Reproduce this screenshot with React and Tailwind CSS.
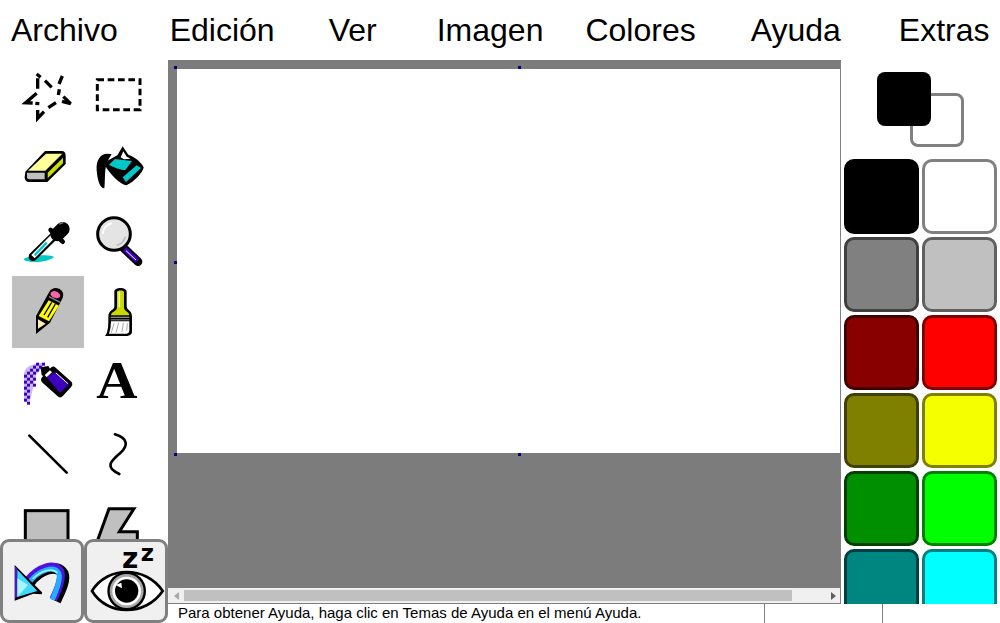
import React from "react";

const menus = [
  { label: "Archivo", cls: "ml-[11px]" },
  { label: "Edición", cls: "ml-[52px]" },
  { label: "Ver", cls: "ml-[54px]" },
  { label: "Imagen", cls: "ml-[60px]" },
  { label: "Colores", cls: "ml-[42px]" },
  { label: "Ayuda", cls: "ml-[55px]" },
  { label: "Extras", cls: "ml-[58px]" },
];

const swatches = [
  "bg-[#000000] border-[#000000]",
  "bg-[#ffffff] border-[#808080]",
  "bg-[#808080] border-[#404040]",
  "bg-[#c0c0c0] border-[#606060]",
  "bg-[#880000] border-[#400000]",
  "bg-[#ff0000] border-[#800000]",
  "bg-[#808000] border-[#404000]",
  "bg-[#f6ff00] border-[#808000]",
  "bg-[#008f00] border-[#004000]",
  "bg-[#00ff00] border-[#008000]",
  "bg-[#008680] border-[#004040]",
  "bg-[#00ffff] border-[#008080]",
];

// drawings use the coordinates of a 3x blow-up, hence the big viewBoxes
const Icon = ({ box, children }) => (
  <svg viewBox={box} className="w-[72px] h-[72px]">
    {children}
  </svg>
);

const Lasso = () => (
  <Icon box="36 0 216 216">
    <path
      d="M110 42L122 52M113 55L113 86M110 100L77 128L98 129M106 130L118 131M113 150L113 175L132 155M145 143L168 128M186 124L212 131L190 110M175 105L178 88M177 72L187 48M155 82L135 62"
      fill="none"
      stroke="#000"
      strokeWidth="10"
    />
  </Icon>
);

const RectSelect = () => (
  <Icon box="252 0 216 216">
    <rect x="292" y="59" width="128" height="90" fill="none" stroke="#000" strokeWidth="9" strokeDasharray="20 11" />
  </Icon>
);

const Eraser = () => (
  <Icon box="36 216 216 216">
    <path d="M76 335L135 273H185Q197 273 197 288V312L142 366H88Q74 366 74 352Z" fill="#000" />
    <path d="M84 332L138 281H187L136 332Z" fill="#ffff99" />
    <path d="M81 338H134V358H88Q81 358 81 352Z" fill="#c0c0c0" />
    <path d="M143 338L189 293V310L143 355Z" fill="#c8e000" />
  </Icon>
);

const Fill = () => (
  <Icon box="252 216 216 216">
    <path d="M335 283C302 274 288 300 290 330C292 360 300 385 313 385C318 350 308 320 335 283Z" fill="#000" />
    <path d="M368 259L385 284C405 290 425 308 431 322C428 340 395 372 378 376C360 372 332 345 314 315L325 301L352 286Z" fill="#000" />
    <path d="M327 314L345 297L396 303L376 330C362 330 340 322 327 314Z" fill="#00c8c8" />
    <path d="M362 292L370 274L380 290L392 296L372 298Z" fill="#ffffff" />
    <path d="M378 366L368 352L410 316L423 324Z" fill="#00c8c8" />
  </Icon>
);

const Dropper = () => (
  <Icon box="36 432 216 216">
    <path d="M72 596C90 585 140 582 162 590C150 605 95 612 72 600Z" fill="#00c8c8" />
    <path d="M99 590L165 525" stroke="#000" strokeWidth="26" strokeLinecap="round" />
    <path d="M99 590L160 528" stroke="#fff" strokeWidth="14" />
    <path d="M104 586L140 548" stroke="#00c8c8" strokeWidth="7" />
    <path d="M152 510L188 545" stroke="#000" strokeWidth="14" strokeLinecap="round" />
    <path d="M172 523L188 507" stroke="#000" strokeWidth="42" strokeLinecap="round" />
    <path d="M178 492L190 488" stroke="#777" strokeWidth="4" />
  </Icon>
);

const Magnifier = () => (
  <Icon box="252 432 216 216">
    <path d="M372 565L414 605" stroke="#000" strokeWidth="26" strokeLinecap="round" />
    <path d="M374 567L412 603" stroke="#4000c0" strokeWidth="15" />
    <path d="M378 572L408 600" stroke="#fff" strokeWidth="3" />
    <circle cx="342" cy="522" r="49" fill="#e4e4e4" stroke="#000" strokeWidth="9" />
    <path d="M308 522A34 34 0 0 1 335 490" fill="none" stroke="#fff" strokeWidth="6" />
    <path d="M350 556A34 34 0 0 0 376 530" fill="none" stroke="#bbb" strokeWidth="5" />
  </Icon>
);

const Pencil = () => (
  <Icon box="36 48 216 216">
    <path d="M108 222L108 168L148 95C155 82 175 80 185 92C192 100 190 110 186 118L150 188Z" fill="#000" />
    <path d="M116 168L146 121L177 137L147 184Z" fill="#ffff00" />
    <path d="M132 165L155 127M143 172L166 132" stroke="#000" strokeWidth="4" />
    <path d="M114 178L137 191L114 206Z" fill="#ffeeb0" />
    <path d="M147 110L182 128" stroke="#888" strokeWidth="4" />
    <ellipse cx="166" cy="104" rx="15" ry="10" fill="#ff60b0" transform="rotate(20 166 104)" />
  </Icon>
);

const Brush = () => (
  <Icon box="252 48 216 216">
    <path d="M343 95C343 80 380 80 380 95L380 140C380 150 396 150 396 170L396 215C396 225 385 228 375 228L315 228C325 215 325 195 325 170C325 150 343 150 343 140Z" fill="#000" />
    <path d="M351 96C351 90 372 90 372 96L372 142C372 155 388 155 388 166H333C333 155 351 155 351 142Z" fill="#c8d800" />
    <path d="M358 95V142" stroke="#f4ff90" strokeWidth="5" />
    <rect x="332" y="170" width="56" height="4" fill="#888" />
    <rect x="332" y="178" width="56" height="3" fill="#888" />
    <path d="M333 184H388V214Q388 220 380 221H327Q333 205 333 184Z" fill="#fff" />
    <path d="M342 190L334 218M356 188L348 218M370 188L366 216M382 190L380 212" stroke="#aaa" strokeWidth="3" />
  </Icon>
);

const spray = [];
for (let y = 308; y < 426; y += 9) {
  for (let x = 72; x < 134; x += 9) {
    const inBand =
      (y < 317 && x >= 108) ||
      (y >= 317 && y < 326 && x >= 90 && x < 130) ||
      (y >= 326 && y < 344 && x >= 81 && x < 117) ||
      (y >= 344 && y < 380 && x < 108) ||
      (y >= 380 && x < 90);
    if (inBand && ((x - 72) / 9 + (y - 308) / 9) % 2 === 0) spray.push([x, y]);
  }
}

const Spray = () => (
  <Icon box="36 264 216 216">
    <path d="M72 424V340Q76 312 128 308V322L108 344L90 424Z" fill="#c8b8f4" />
    {spray.map(([x, y]) => (
      <rect key={x + "-" + y} x={x} y={y} width="9" height="9" fill="#4000c0" />
    ))}
    <path d="M122 322L145 318L152 330L132 350L125 345Z" fill="#000" />
    <rect x="128" y="336" width="84" height="60" rx="12" fill="#000" transform="rotate(42 170 366)" />
    <path d="M134 345L150 331L156 337L140 352Z" fill="#fff" />
    <path d="M140 352L166 335L207 372L180 399Z" fill="#4000c0" />
    <path d="M168 339L204 371" stroke="#fff" strokeWidth="3" />
  </Icon>
);

const TextTool = () => (
  <Icon box="252 264 216 216">
    <text transform="translate(351 415) scale(1.1 1)" textAnchor="middle" fontFamily="'Liberation Serif', serif" fontWeight="bold" fontSize="156" fill="#000">
      A
    </text>
  </Icon>
);

const Line = () => (
  <Icon box="36 0 216 216">
    <path d="M88 47L200 158" stroke="#000" strokeWidth="8" strokeLinecap="round" />
  </Icon>
);

const Curve = () => (
  <Icon box="252 0 216 216">
    <path d="M345 43C385 55 385 78 360 100C330 125 315 142 358 162" fill="none" stroke="#000" strokeWidth="8" strokeLinecap="round" />
  </Icon>
);

const RectTool = () => (
  <Icon box="36 216 216 216">
    <rect x="76" y="272" width="128" height="130" fill="#c0c0c0" stroke="#000" strokeWidth="9" />
  </Icon>
);

const PolyTool = () => (
  <Icon box="252 216 216 216">
    <path d="M327 266H402L358 335H412V410H275Z" fill="#c0c0c0" stroke="#000" strokeWidth="9" />
  </Icon>
);

const tools = [
  Lasso, RectSelect, Eraser, Fill, Dropper, Magnifier, Pencil, Brush, Spray, TextTool, Line, Curve, RectTool, PolyTool,
];

const Undo = () => (
  <svg viewBox="9 21 234 234" className="w-[78px] h-[78px]">
    <path d="M90 142C118 104 172 84 190 116C198 136 180 170 167 198" fill="none" stroke="#000" strokeWidth="32" />
    <path d="M84 136C114 98 164 80 181 110C189 130 172 168 160 193" fill="none" stroke="#5010e0" strokeWidth="24" />
    <path d="M88 142C116 106 162 90 176 114C184 132 168 168 157 194" fill="none" stroke="#20b0ff" strokeWidth="15" />
    <path d="M98 132C122 108 156 96 172 114" fill="none" stroke="#a0f4ff" strokeWidth="5" />
    <path d="M44 90L126 172V178L100 176L44 197Z" fill="#000" />
    <path d="M45 94L52 102V186L45 190Z" fill="#5010e0" />
    <path d="M52 104L112 168L52 186Z" fill="#40d8ff" />
    <path d="M52 130L84 150L52 186Z" fill="#a8f4ff" />
  </svg>
);

const Eye = () => (
  <svg viewBox="9 21 234 234" className="w-[78px] h-[78px] overflow-visible">
    <text x="114" y="99" fontFamily="'DejaVu Sans', sans-serif" fontWeight="bold" fontSize="84" fill="#000">
      z
    </text>
    <text x="170" y="78" fontFamily="'DejaVu Sans', sans-serif" fontWeight="bold" fontSize="68" fill="#000">
      z
    </text>
    <path d="M24 168C70 92 185 92 236 168C185 244 70 244 24 168Z" fill="#fff" stroke="#000" strokeWidth="8" />
    <circle cx="128" cy="168" r="58" fill="#000" />
    <circle cx="128" cy="168" r="51" fill="#a8a8a8" />
    <circle cx="128" cy="168" r="43" fill="#fff" />
    <circle cx="128" cy="168" r="35" fill="#000" />
    <path d="M94 150L112 143L114 160Z" fill="#fff" />
  </svg>
);

export default function App() {
  return (
    <div className="relative w-[1000px] h-[623px] flex flex-col overflow-hidden bg-white font-['Liberation_Sans',sans-serif] text-black">
      <div className="h-[60px] flex items-center text-[32px] leading-none">
        {menus.map((m) => (
          <span key={m.label} className={m.cls}>
            {m.label}
          </span>
        ))}
      </div>

      <div className="h-[544px] flex">
        <div className="w-[168px] h-full overflow-hidden px-3">
          <div className="grid grid-cols-[72px_72px] auto-rows-[72px]">
            {tools.map((Tool, i) => (
              <div key={i} className={i === 6 ? "bg-[#c0c0c0]" : ""}>
                <Tool />
              </div>
            ))}
          </div>
        </div>

        <div className="w-[673px] h-full flex flex-col border-r border-[#808080]">
          <div className="h-[528px] bg-[#7c7c7c] pl-[9px] pt-[9px] overflow-hidden">
            <div className="relative w-[684px] h-[384px] bg-white">
              <div className="absolute -left-[3px] -top-[3px] w-[3px] h-[3px] bg-[#000080]" />
              <div className="absolute left-[341px] -top-[3px] w-[3px] h-[3px] bg-[#000080]" />
              <div className="absolute -left-[3px] top-[192px] w-[3px] h-[3px] bg-[#000080]" />
              <div className="absolute -left-[3px] top-full w-[3px] h-[3px] bg-[#000080]" />
              <div className="absolute left-[341px] top-full w-[3px] h-[3px] bg-[#000080]" />
            </div>
          </div>
          <div className="h-[16px] flex items-center bg-[#f0f0f0] border-b border-[#808080]">
            <svg viewBox="0 0 5 8" className="ml-[6px] w-[5px] h-[8px]">
              <path d="M5 0V8L0 4Z" fill="#a8a8a8" />
            </svg>
            <div className="ml-[5px] w-[608px] h-[11px] bg-[#c0c0c0]" />
            <svg viewBox="0 0 5 8" className="ml-[39px] w-[5px] h-[8px]">
              <path d="M0 0V8L5 4Z" fill="#606060" />
            </svg>
          </div>
        </div>

        <div className="flex-1 h-full overflow-hidden pl-[3px]">
          <div className="h-[99px] pl-[66px] pt-[33px]">
            <div className="relative w-[54px] h-[54px] bg-white border-[3px] border-[#808080] rounded-lg">
              <div className="absolute -left-[36px] -top-[24px] w-[54px] h-[54px] bg-black rounded-lg" />
            </div>
          </div>
          <div className="grid grid-cols-[75px_75px] auto-rows-[75px] gap-[3px]">
            {swatches.map((s) => (
              <div key={s} className={"border-[3px] rounded-[10px] " + s} />
            ))}
          </div>
        </div>
      </div>

      <div className="h-[19px] flex text-[15px] leading-[17px] whitespace-nowrap">
        <div className="w-[765px] pl-[178px] border-r border-[#808080]">
          Para obtener Ayuda, haga clic en Temas de Ayuda en el menú Ayuda.
        </div>
        <div className="w-[118px] border-r border-[#808080]" />
      </div>

      <div className="absolute left-0 bottom-0 flex">
        <div className="w-[84px] h-[84px] bg-[#f0f0f0] border-[3px] border-[#808080] rounded-[9px]">
          <Undo />
        </div>
        <div className="w-[84px] h-[84px] bg-[#f0f0f0] border-[3px] border-[#808080] rounded-[9px]">
          <Eye />
        </div>
      </div>
    </div>
  );
}
